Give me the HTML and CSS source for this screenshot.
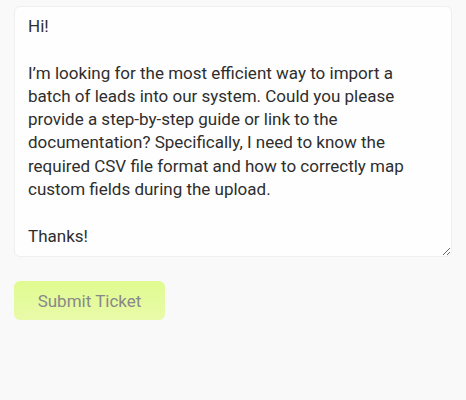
FILE: index.html
```html
<!DOCTYPE html>
<html lang="en">
<head>
<meta charset="utf-8">
<title>Submit Ticket</title>
<link rel="stylesheet" href="styles.css">
</head>
<body>
<main class="ticket">
<textarea class="ticket-body" rows="10">Hi!

I’m looking for the most efficient way to import a batch of leads into our system. Could you please provide a step-by-step guide or link to the documentation? Specifically, I need to know the required CSV file format and how to correctly map custom fields during the upload.

Thanks!</textarea>
<button class="submit" type="button" disabled>Submit Ticket</button>
</main>
</body>
</html>
```
FILE: styles.css
```css
html, body {
  margin: 0;
  background: #f9f9f9;
}
.ticket {
  display: flex;
  flex-direction: column;
  align-items: flex-start;
  gap: 24px;
  padding: 6px 15px 0 14px;
}
.ticket-body {
  display: block;
  box-sizing: border-box;
  width: 438px;
  height: 251px;
  margin: 0;
  padding: 8px 28px 8px 13px;
  border: 1px solid #efefef;
  border-radius: 6px;
  background: #fefefe;
  color: #2e2e2e;
  font-family: Roboto, "Noto Sans", sans-serif;
  font-size: 17px;
  line-height: 23.3px;
  resize: vertical;
  overflow: hidden;
  outline: none;
}
.submit {
  width: 151px;
  height: 39px;
  border: none;
  border-radius: 6px;
  background: linear-gradient(#e0fb90, #e9faa9);
  color: #888888;
  font-family: Roboto, "Noto Sans", sans-serif;
  font-size: 17px;
  padding: 0;
}
```
